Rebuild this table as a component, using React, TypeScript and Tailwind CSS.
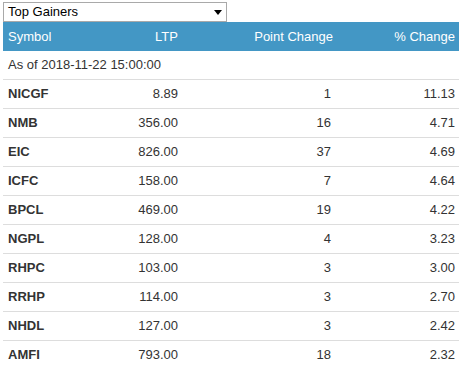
const rows = [
  { symbol: "NICGF", ltp: "8.89", point: "1", pct: "11.13" },
  { symbol: "NMB", ltp: "356.00", point: "16", pct: "4.71" },
  { symbol: "EIC", ltp: "826.00", point: "37", pct: "4.69" },
  { symbol: "ICFC", ltp: "158.00", point: "7", pct: "4.64" },
  { symbol: "BPCL", ltp: "469.00", point: "19", pct: "4.22" },
  { symbol: "NGPL", ltp: "128.00", point: "4", pct: "3.23" },
  { symbol: "RHPC", ltp: "103.00", point: "3", pct: "3.00" },
  { symbol: "RRHP", ltp: "114.00", point: "3", pct: "2.70" },
  { symbol: "NHDL", ltp: "127.00", point: "3", pct: "2.42" },
  { symbol: "AMFI", ltp: "793.00", point: "18", pct: "2.32" },
];

export default function App() {
  return (
    <div className="w-[462px] h-[367px] overflow-hidden bg-white pl-[3px] pr-[3px] pt-[2px] font-['Liberation_Sans',Arial,sans-serif] text-[13px] text-[#333]">
      <div className="w-[224px] h-[20px] border border-[#a9a9a9] flex items-center justify-between pl-[4px] pr-[4px] text-black">
        <span>Top Gainers</span>
        <svg width="8" height="5" viewBox="0 0 8 5">
          <path d="M0 0 L8 0 L4 5 Z" fill="#000" />
        </svg>
      </div>

      <div className="w-[456px]">
        <div className="flex h-[29px] items-center bg-[#4397c5] text-white">
          <div className="w-[90px] pl-[5px]">Symbol</div>
          <div className="w-[90px] pr-[5px] text-right">LTP</div>
          <div className="w-[155px] pr-[5px] text-right">Point Change</div>
          <div className="w-[121px] pr-[4px] text-right">% Change</div>
        </div>

        <div className="flex h-[29px] items-center border-b border-[#ddd] pl-[5px]">
          As of 2018-11-22 15:00:00
        </div>

        {rows.map((r) => (
          <div key={r.symbol} className="flex h-[29px] items-center border-b border-[#ddd]">
            <div className="w-[90px] pl-[5px] font-bold">{r.symbol}</div>
            <div className="w-[90px] pr-[5px] text-right">{r.ltp}</div>
            <div className="w-[155px] pr-[7px] text-right">{r.point}</div>
            <div className="w-[121px] pr-[4px] text-right">{r.pct}</div>
          </div>
        ))}
      </div>
    </div>
  );
}
